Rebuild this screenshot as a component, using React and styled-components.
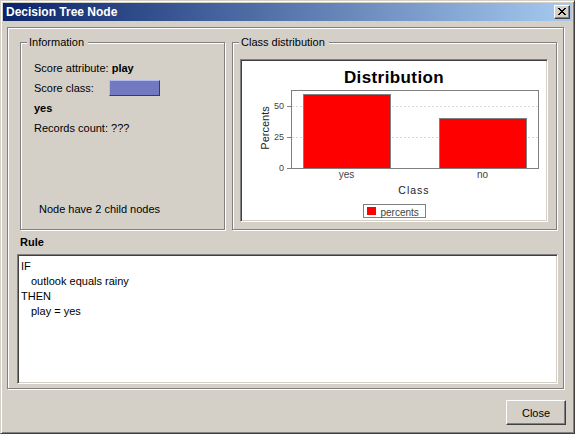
import React from 'react';
import styled, { createGlobalStyle } from 'styled-components';

const GlobalStyle = createGlobalStyle`
  html, body { margin: 0; padding: 0; background: #d4d0c8; }
  body { font-family: "Liberation Sans", Arial, sans-serif; font-size: 11px; color: #000; }
  * { box-sizing: border-box; }
`;

const Window = styled.div`
  width: 575px;
  height: 434px;
  background: #d4d0c8;
  border: 1px solid;
  border-color: #d4d0c8 #404040 #404040 #d4d0c8;
  box-shadow: inset 1px 1px #fff, inset -1px -1px #808080;
  padding: 2px;
  display: flex;
  flex-direction: column;
`;

const TitleBar = styled.div`
  height: 18px;
  flex: none;
  display: flex;
  align-items: center;
  justify-content: space-between;
  padding: 0 2px 0 3px;
  background: linear-gradient(to right, #0a246a, #a6caf0);
`;

const TitleText = styled.span`
  color: #fff;
  font-weight: bold;
  font-size: 12px;
  line-height: 14px;
`;

const TitleButton = styled.div`
  width: 16px;
  height: 14px;
  background: #d4d0c8;
  border: 1px solid;
  border-color: #fff #404040 #404040 #fff;
  box-shadow: inset -1px -1px #808080;
  display: flex;
  align-items: center;
  justify-content: center;
  padding: 0 1px 1px 0;
`;

const MainPanel = styled.div`
  margin: 6px 0 0 4px;
  width: 557px;
  height: 362px;
  flex: none;
  border: 1px solid #808080;
  box-shadow: inset 1px 1px #fff, 1px 1px #fff;
  padding: 14px 5px 4px 9px;
  display: flex;
  flex-direction: column;
`;

const GroupRow = styled.div`
  display: flex;
  gap: 7px;
  height: 188px;
  margin-left: 3px;
  flex: none;
`;

const Group = styled.div`
  position: relative;
  width: ${p => p.$w}px;
  height: 188px;
  border: 1px solid #808080;
  box-shadow: inset 1px 1px #fff, 1px 1px #fff;
  display: flex;
  flex-direction: column;
  padding: ${p => p.$pad};
`;

const GroupTitle = styled.span`
  position: absolute;
  top: -7px;
  left: 6px;
  padding: 0 4px 0 2px;
  background: #d4d0c8;
  line-height: 13px;
  white-space: nowrap;
`;

const InfoRow = styled.div`
  height: 20px;
  line-height: 20px;
  display: flex;
  align-items: center;
  white-space: pre;
  font-weight: ${p => (p.$bold ? 'bold' : 'normal')};
  padding-left: ${p => p.$indent || 0}px;
  margin-top: ${p => (p.$bottom ? 'auto' : '0')};
`;

const Bold = styled.b`
  font-weight: bold;
`;

const Swatch = styled.span`
  display: inline-block;
  width: 51px;
  height: 16px;
  margin-left: 15px;
  background: #7379c1;
  border: 1px solid;
  border-color: #b4baf0 #353a66 #353a66 #b4baf0;
`;

const Sunken = styled.div`
  background: #fff;
  border: 1px solid;
  border-color: #808080 #fff #fff #808080;
  box-shadow: inset 1px 1px #404040, inset -1px -1px #d4d0c8;
`;

const ChartPanel = styled(Sunken)`
  width: 308px;
  height: 163px;
  padding: 1px;
`;

const RuleLabel = styled.div`
  margin: 5px 0 0 3px;
  height: 14px;
  line-height: 14px;
  font-weight: bold;
  flex: none;
`;

const RuleArea = styled(Sunken)`
  margin-top: 5px;
  height: 130px;
  flex: none;
  padding: 4px 3px;
`;

const RuleLine = styled.div`
  line-height: 15px;
  height: 15px;
  padding-left: ${p => (p.$indent ? 10 : 0)}px;
  white-space: pre;
`;

const Footer = styled.div`
  display: flex;
  justify-content: flex-end;
  padding: 11px 6px 0 0;
`;

const Button = styled.button`
  width: 60px;
  height: 25px;
  font-family: "Liberation Sans", Arial, sans-serif;
  font-size: 11px;
  color: #000;
  background: #d4d0c8;
  border: 1px solid;
  border-color: #fff #404040 #404040 #fff;
  box-shadow: inset -1px -1px #808080;
  padding: 0;
`;

const CloseGlyph = () => (
  <svg width="8" height="7" viewBox="0 0 8 7" shapeRendering="crispEdges">
    <path
      fill="#000"
      d="M0 0h2v1H0z M6 0h2v1H6z M1 1h2v1H1z M5 1h2v1H5z M2 2h4v1H2z M3 3h2v1H3z M2 4h4v1H2z M1 5h2v1H1z M5 5h2v1H5z M0 6h2v1H0z M6 6h2v1H6z"
    />
  </svg>
);

const data = [
  { label: 'yes', value: 60 },
  { label: 'no', value: 40 },
];

const Chart = () => {
  const plot = { x: 49, y: 29, w: 247, h: 78 };
  const scale = 1.24;
  const yFor = v => plot.y + plot.h - v * scale;
  const font = '"Liberation Sans", Arial, sans-serif';
  const bars = [
    { x: 61, w: 87 },
    { x: 197, w: 87 },
  ];
  return (
    <svg width="304" height="159" viewBox="0 0 304 159" fontFamily={font}>
      <text x="152" y="21.5" textAnchor="middle" fontWeight="bold" fontSize="17" letterSpacing="0.4">
        Distribution
      </text>
      <rect x={plot.x + 0.5} y={plot.y + 0.5} width={plot.w} height={plot.h} fill="#fff" stroke="#808080" />
      {[50, 25].map(v => (
        <line
          key={v}
          x1={plot.x + 1}
          x2={plot.x + plot.w}
          y1={Math.round(yFor(v)) + 0.5}
          y2={Math.round(yFor(v)) + 0.5}
          stroke="#d8d8d8"
          strokeDasharray="2 2"
        />
      ))}
      {data.map((d, i) => (
        <rect
          key={d.label}
          x={bars[i].x + 0.5}
          y={Math.round(yFor(d.value)) + 0.5}
          width={bars[i].w}
          height={Math.round(d.value * scale)}
          fill="#ff0000"
          stroke="#808080"
        />
      ))}
      {[50, 25, 0].map(v => (
        <g key={v}>
          <line x1={45} x2={49} y1={Math.round(yFor(v)) + 0.5} y2={Math.round(yFor(v)) + 0.5} stroke="#808080" />
          <text x="42" y={yFor(v) + 3.3} textAnchor="end" fontSize="9" fill="#444">
            {v}
          </text>
        </g>
      ))}
      <text transform="translate(27 67) rotate(-90)" textAnchor="middle" fontSize="11" fill="#222">
        Percents
      </text>
      {data.map((d, i) => (
        <text key={d.label} x={bars[i].x + bars[i].w / 2} y="116.5" textAnchor="middle" fontSize="10" fill="#444">
          {d.label}
        </text>
      ))}
      <text x="172" y="133" textAnchor="middle" fontSize="10.5" letterSpacing="1" fill="#222">
        Class
      </text>
      <rect x="121.5" y="143.5" width="62" height="13" fill="#fff" stroke="#808080" />
      <rect x="125" y="146" width="9" height="8" fill="#ff0000" />
      <text x="138.5" y="154.5" fontSize="10" fill="#444">
        percents
      </text>
    </svg>
  );
};

export default function App() {
  return (
    <>
      <GlobalStyle />
      <Window>
        <TitleBar>
          <TitleText>Decision Tree Node</TitleText>
          <TitleButton>
            <CloseGlyph />
          </TitleButton>
        </TitleBar>
        <MainPanel>
          <GroupRow>
            <Group $w={205} $pad="15px 4px 10px 13px">
              <GroupTitle>Information</GroupTitle>
              <InfoRow>
                Score attribute: <Bold>play</Bold>
              </InfoRow>
              <InfoRow>
                Score class:
                <Swatch />
              </InfoRow>
              <InfoRow $bold>yes</InfoRow>
              <InfoRow>Records count: ???</InfoRow>
              <InfoRow $bottom $indent={5}>
                Node have 2 child nodes
              </InfoRow>
            </Group>
            <Group $w={325} $pad="16px 7px 6px 7px">
              <GroupTitle>Class distribution</GroupTitle>
              <ChartPanel>
                <Chart />
              </ChartPanel>
            </Group>
          </GroupRow>
          <RuleLabel>Rule</RuleLabel>
          <RuleArea>
            <RuleLine>IF</RuleLine>
            <RuleLine $indent>outlook equals rainy</RuleLine>
            <RuleLine>THEN</RuleLine>
            <RuleLine $indent>play = yes</RuleLine>
          </RuleArea>
        </MainPanel>
        <Footer>
          <Button>Close</Button>
        </Footer>
      </Window>
    </>
  );
}
